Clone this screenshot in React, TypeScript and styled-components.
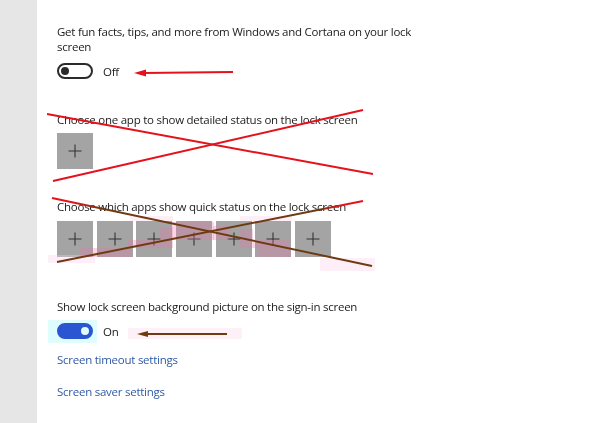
import React from "react";
import styled, { createGlobalStyle } from "styled-components";

const GlobalStyle = createGlobalStyle`
  html, body { margin: 0; padding: 0; background: #fff; }
  body { font-family: "Open Sans", "Noto Sans", sans-serif; }
`;

const Page = styled.div`
  position: relative;
  display: flex;
  width: 600px;
  height: 423px;
  overflow: hidden;
  background: #fff;
`;

const Sidebar = styled.aside`
  flex: none;
  width: 37px;
  background: #e6e6e6;
`;

const Main = styled.main`
  flex: 1;
  display: flex;
  flex-direction: column;
  align-items: flex-start;
  padding: 24px 0 0 20px;
  font-size: 11.5px;
  line-height: 15px;
  letter-spacing: -0.25px;
`;

const Label = styled.p<{ $mt?: number }>`
  margin: ${(p) => p.$mt ?? 0}px 0 0 0;
  color: #1b1b1b;
`;

const ToggleRow = styled.div<{ $mt: number }>`
  display: flex;
  align-items: center;
  gap: 10px;
  margin-top: ${(p) => p.$mt}px;
  color: #1b1b1b;
`;

const Toggle = styled.span<{ $on?: boolean }>`
  position: relative;
  box-sizing: border-box;
  display: block;
  width: 36px;
  height: 16px;
  border-radius: 8px;
  border: 2px solid ${(p) => (p.$on ? "#3157d2" : "#2b2b2b")};
  background: ${(p) => (p.$on ? "#3157d2" : "transparent")};
  &::after {
    content: "";
    position: absolute;
    top: 2px;
    ${(p) => (p.$on ? "right: 2px;" : "left: 2px;")}
    width: 8px;
    height: 8px;
    border-radius: 50%;
    background: ${(p) => (p.$on ? "#fff" : "#2b2b2b")};
  }
`;

const TileRow = styled.div<{ $mt: number }>`
  display: flex;
  gap: 3.7px;
  margin-top: ${(p) => p.$mt}px;
`;

const Tile = styled.div`
  display: grid;
  place-items: center;
  width: 36px;
  height: 36px;
  background: #a4a4a4;
`;

const Link = styled.a<{ $mt: number }>`
  display: block;
  margin-top: ${(p) => p.$mt}px;
  color: #2f5aa4;
  text-decoration: none;
`;

const Overlay = styled.svg`
  position: absolute;
  left: 0;
  top: 0;
  width: 600px;
  height: 423px;
  pointer-events: none;
`;

const Plus = () => (
  <svg width="14" height="14" viewBox="0 0 14 14">
    <path d="M7 0.5V13.5M0.5 7H13.5" stroke="#333" strokeWidth="1.1" fill="none" />
  </svg>
);

const RED = "#e5121c";
const BROWN = "#6e3a12";
const PINK = "rgba(235,120,170,0.3)";
const LIGHT = "rgba(250,205,235,0.35)";

const pinkRects: [number, number, number, number, string][] = [
  [48, 255, 47, 8, LIGHT],
  [80, 248, 52, 9, PINK],
  [128, 240, 45, 8, PINK],
  [160, 227, 13, 13, PINK],
  [130, 216, 43, 5, LIGHT],
  [172, 222, 42, 18, PINK],
  [213, 226, 16, 14, PINK],
  [240, 229, 13, 11, PINK],
  [240, 240, 50, 8, PINK],
  [240, 216, 52, 5, LIGHT],
  [257, 248, 34, 9, PINK],
  [320, 258, 55, 13, LIGHT],
  [128, 328, 114, 11, "rgba(252,222,238,0.45)"],
];

export default function App() {
  return (
    <>
      <GlobalStyle />
      <Page>
        <Sidebar />
        <Main>
          <Label>
            Get fun facts, tips, and more from Windows and Cortana on your lock
            <br />
            screen
          </Label>
          <ToggleRow $mt={9}>
            <Toggle />
            <span>Off</span>
          </ToggleRow>

          <Label $mt={33}>Choose one app to show detailed status on the lock screen</Label>
          <TileRow $mt={6}>
            <Tile>
              <Plus />
            </Tile>
          </TileRow>

          <Label $mt={30}>Choose which apps show quick status on the lock screen</Label>
          <TileRow $mt={7}>
            {Array.from({ length: 7 }).map((_, i) => (
              <Tile key={i}>
                <Plus />
              </Tile>
            ))}
          </TileRow>

          <Label $mt={42}>Show lock screen background picture on the sign-in screen</Label>
          <ToggleRow $mt={9}>
            <Toggle $on />
            <span>On</span>
          </ToggleRow>

          <Link href="#" $mt={13}>Screen timeout settings</Link>
          <Link href="#" $mt={17}>Screen saver settings</Link>
        </Main>

        <Overlay viewBox="0 0 600 423">
          <defs>
            <linearGradient id="g1" gradientUnits="userSpaceOnUse" x1="52" y1="0" x2="372" y2="0">
              <stop offset="0.06" stopColor={RED} />
              <stop offset="0.16" stopColor={BROWN} />
            </linearGradient>
            <linearGradient id="g2" gradientUnits="userSpaceOnUse" x1="57" y1="0" x2="363" y2="0">
              <stop offset="0.86" stopColor={BROWN} />
              <stop offset="0.93" stopColor={RED} />
            </linearGradient>
          </defs>
          <rect x="48" y="320" width="49" height="23" fill="#dffcfe" style={{ mixBlendMode: "multiply" }} />
          {pinkRects.map(([x, y, w, h, c], i) => (
            <rect key={i} x={x} y={y} width={w} height={h} fill={c} />
          ))}

          <line x1="233" y1="72" x2="143" y2="73" stroke={RED} strokeWidth="2" />
          <polygon points="134,73 146,69.5 146,76.5" fill={RED} />

          <line x1="47" y1="114" x2="373" y2="174" stroke={RED} strokeWidth="2" />
          <line x1="53" y1="181" x2="363" y2="110" stroke={RED} strokeWidth="2" />

          <line x1="52" y1="198" x2="372" y2="266" stroke="url(#g1)" strokeWidth="2" />
          <line x1="57" y1="262" x2="363" y2="201" stroke="url(#g2)" strokeWidth="2" />

          <line x1="227" y1="334" x2="146" y2="334" stroke={BROWN} strokeWidth="2" />
          <polygon points="137,334 148,331 148,337" fill={BROWN} />
        </Overlay>
      </Page>
    </>
  );
}
